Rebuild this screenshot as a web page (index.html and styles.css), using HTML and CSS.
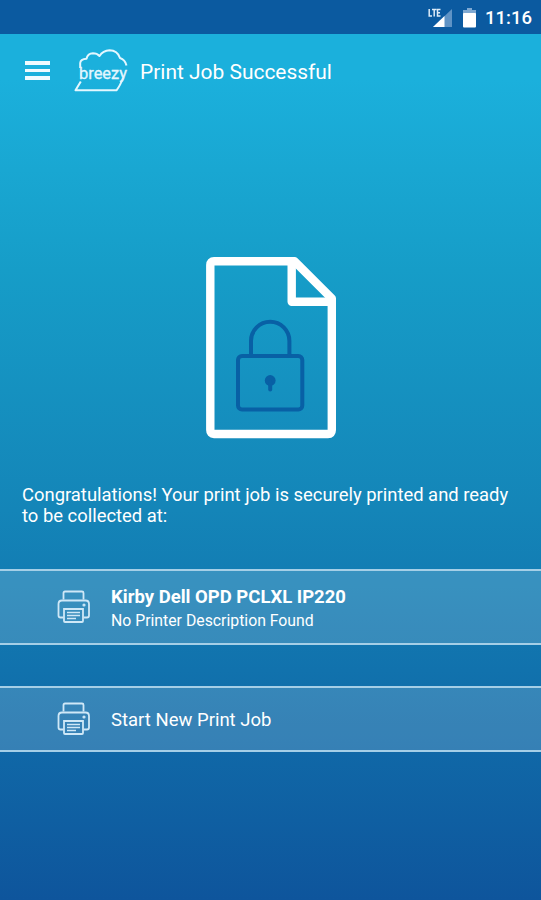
FILE: index.html
```html
<!DOCTYPE html>
<html lang="en">
<head>
    <meta charset="UTF-8">
    <meta name="viewport" content="width=device-width, initial-scale=1.0">
    <title>Print Job Successful</title>
    <link rel="stylesheet" href="styles.css">
</head>
<body>
    <div class="statusbar">
        <svg class="signal" width="26" height="20" viewBox="0 0 26 20">
            <path d="M24 1 V19 H5 Z" fill="#5f93c5"/>
            <path d="M16.500 8 V19 H5 Z" fill="#fff"/>
            <path d="M1.200 1 V8 H4 M4 1.500 H8.500 M6.200 1.500 V8.500 M12.500 1.500 H9.500 V8 H12.500 M9.500 4.700 H12" fill="none" stroke="#dcebf8" stroke-width="1.500"/>
        </svg>
        <svg class="battery" width="13" height="20" viewBox="0 0 13 20">
            <path d="M4 0 H9 V2 H13 V6 H0 V2 H4 Z" fill="#7fa9d2"/>
            <rect x="0" y="5" width="13" height="14.500" rx="1" fill="#fff"/>
        </svg>
        <span class="clock">11:16</span>
    </div>

    <div class="toolbar">
        <button class="menu" aria-label="Menu">
            <span></span>
            <span></span>
            <span></span>
        </button>
        <svg class="logo" width="58" height="46" viewBox="0 0 58 46">
            <path d="M7.200 20 V15 Q7.500 11 13.500 10.800 Q14.500 5.500 20 5.300 Q24 5.300 26.500 8 Q30 2.500 36.500 2.300 Q44.500 2.500 47 10 Q52 11.500 53.500 17.500" />
            <path d="M7.800 33.500 L2.500 42.300 H43.500 Q47 38 50 30" />
            <text x="6" y="30.500" textLength="48" lengthAdjust="spacingAndGlyphs">breezy</text>
        </svg>
        <h1 class="title">Print Job Successful</h1>
    </div>

    <div class="content">
        <!-- document with padlock -->
        <svg class="document" width="130" height="182" viewBox="0 0 130 182">
            <g fill="none" stroke="#fff" stroke-width="8.400" stroke-linejoin="round">
                <path d="M8 4.300 H88.500 L125.800 41.500 V173 Q125.800 177 122 177 H8 Q4.300 177 4.300 173 V8 Q4.300 4.300 8 4.300 Z"/>
                <path d="M85.700 5 V44.700 H125"/>
            </g>
            <g fill="none" stroke="#0860a5" stroke-width="4">
                <rect x="32" y="99" width="64.300" height="53.500" rx="4"/>
                <path d="M45 99 V84 A19.200 19.200 0 0 1 83.400 84 V99"/>
            </g>
            <circle cx="64.200" cy="123.500" r="5.400" fill="#0860a5"/>
            <path d="M64.200 125 V132.500" stroke="#0860a5" stroke-width="4" stroke-linecap="round"/>
        </svg>
        <p class="message">Congratulations! Your print job is securely printed and ready<br>to be collected at:</p>
    </div>

    <div class="item printer">
        <svg class="icon" width="34" height="34" viewBox="0 0 34 34">
            <path d="M6.500 9.500 V3 Q6.500 1.500 8 1.500 H25 Q26.500 1.500 26.500 3 V9.500"/>
            <path d="M6.500 27.500 H3.500 Q1.500 27.500 1.500 25.500 V14 Q1.500 10.500 5 10.500 H28.500 Q32 10.500 32 14 V25.500 Q32 27.500 30 27.500 H26.500"/>
            <path d="M7 19 H26 V31 Q26 32 25 32 H8 Q7 32 7 31 Z"/>
            <path class="lines" d="M10 22.500 H23 M10 25.500 H23 M10 28.500 H19"/>
            <circle cx="27" cy="15" r="0.700"/>
        </svg>
        <div class="text">
            <div class="name">Kirby Dell OPD PCLXL IP220</div>
            <div class="description">No Printer Description Found</div>
        </div>
    </div>

    <div class="item new-job">
        <svg class="icon" width="34" height="34" viewBox="0 0 34 34">
            <path d="M6.500 9.500 V3 Q6.500 1.500 8 1.500 H25 Q26.500 1.500 26.500 3 V9.500"/>
            <path d="M6.500 27.500 H3.500 Q1.500 27.500 1.500 25.500 V14 Q1.500 10.500 5 10.500 H28.500 Q32 10.500 32 14 V25.500 Q32 27.500 30 27.500 H26.500"/>
            <path d="M7 19 H26 V31 Q26 32 25 32 H8 Q7 32 7 31 Z"/>
            <path class="lines" d="M10 22.500 H23 M10 25.500 H23 M10 28.500 H19"/>
            <circle cx="27" cy="15" r="0.700"/>
        </svg>
        <div class="label">Start New Print Job</div>
    </div>
</body>
</html>
```
FILE: styles.css
```css
* {
    box-sizing: border-box;
}
body {
    margin: 0;
    height: 900px;
    overflow: hidden;
    font-family: Roboto, 'Liberation Sans', sans-serif;
    color: #fff;
    background: linear-gradient(#1bb0dc 0, #1bb0dc 80px, #19a7d2 170px, #169dc8 270px, #1485b8 510px, #1172ad 670px, #0e559c 900px);
}
.statusbar {
    display: flex;
    align-items: center;
    justify-content: flex-end;
    height: 34px;
    padding: 1px 10px 0 0;
    background: #0b5aa0;
}
.battery {
    margin-left: 9px;
}
.clock {
    width: 46px;
    margin-left: 9px;
    font-size: 18.5px;
    font-weight: 500;
    white-space: nowrap;
}
.toolbar {
    display: flex;
    align-items: center;
    height: 74px;
    padding-left: 25px;
}
.menu {
    display: flex;
    flex-direction: column;
    gap: 4px;
    width: 25px;
    margin-top: -1px;
    padding: 0;
    border: none;
    background: none;
}
.menu span {
    height: 3.5px;
    background: #f0fbff;
}
.logo {
    margin-left: 23px;
    overflow: visible;
    fill: none;
    stroke: #e4f7ff;
    stroke-width: 2;
    stroke-linejoin: round;
}
.logo text {
    font-family: Roboto, sans-serif;
    font-size: 17px;
    fill: #e4f7ff;
    stroke: #e4f7ff;
    stroke-width: 0.3;
}
.title {
    margin: 0 0 0 9px;
    padding-top: 2px;
    font-size: 20.95px;
    font-weight: 400;
}
.content {
    height: 461px;
    padding: 149px 22px 0;
}
.document {
    display: block;
    margin-left: 184px;
}
.message {
    margin: 45px 0 0;
    font-size: 18.42px;
    line-height: 21px;
    white-space: nowrap;
}
.item {
    display: flex;
    align-items: center;
    padding-left: 57px;
    background: rgba(255, 255, 255, 0.16);
    border-top: 2.5px solid #a5cfe7;
    border-bottom: 2.5px solid #a5cfe7;
}
.printer {
    height: 76px;
}
.new-job {
    height: 66px;
    margin-top: 41px;
}
.icon {
    margin-right: 20px;
    fill: none;
    stroke: #cfe8f7;
    stroke-width: 1.8;
}
.icon .lines {
    stroke-width: 1.5;
}
.text {
    padding-top: 3px;
}
.name {
    font-size: 18.5px;
    font-weight: 700;
    line-height: 23px;
}
.description {
    font-size: 15.8px;
    line-height: 23px;
}
.label {
    padding-top: 2px;
    font-size: 18.5px;
}
```
